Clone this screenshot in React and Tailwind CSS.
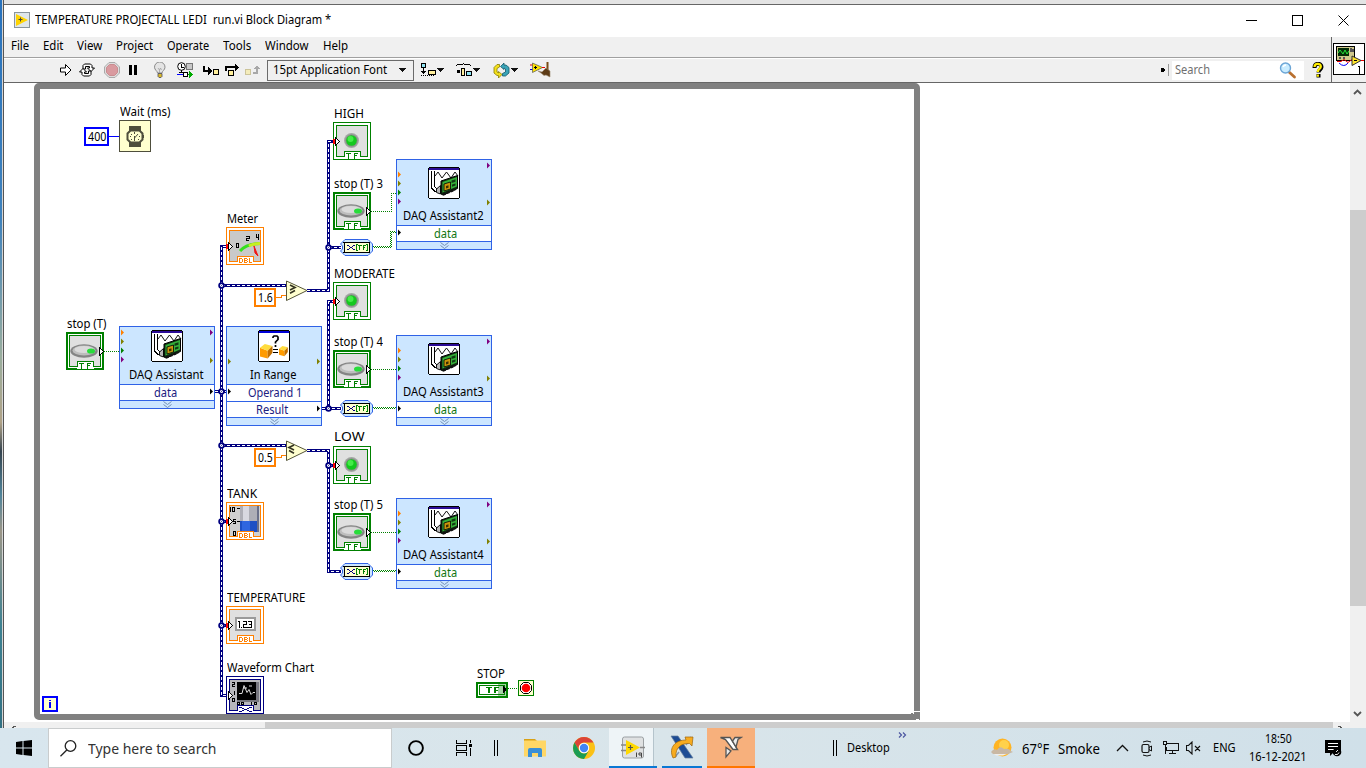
import React, { useLayoutEffect, useRef, useState } from "react";

const FONT = "font-['Noto_Sans','Open_Sans',sans-serif]";

/* One line of text condensed or widened to a given advance width. */
function Fit({ w, className = "", children }) {
  const ref = useRef(null);
  const [k, setK] = useState(1);
  useLayoutEffect(() => {
    const n = ref.current.offsetWidth;
    if (n) setK(w / n);
  }, [w, children]);
  return (
    <span className={"block shrink-0 whitespace-pre " + className} style={{ width: w }}>
      <span ref={ref} className="inline-block origin-left" style={{ transform: `scaleX(${k})` }}>{children}</span>
    </span>
  );
}

function Svg({ w, h, className = "", crisp = true, children }) {
  return (
    <svg width={w} height={h} viewBox={`0 0 ${w} ${h}`} className={"block shrink-0 " + className} shapeRendering={crisp ? "crispEdges" : "auto"} fill="none">
      {children}
    </svg>
  );
}

/* ---------- diagram ---------- */
const OX = 4, OY = 83;

function At({ x, y, children, className = "" }) {
  return <div className={"absolute " + className} style={{ left: x - OX, top: y - OY }}>{children}</div>;
}

function Label({ x, y, w, children }) {
  return (
    <At x={x} y={y - 9} className="text-[12.5px] leading-[18px] text-black">
      <Fit w={w}>{children}</Fit>
    </At>
  );
}

function Tag({ text, color }) {
  return (
    <g>
      <rect x="11" y="29" width="17" height="8" fill="#fff" />
      <path d="M11.500 35V29.500H27.500V35" stroke={color} />
      {text === "TF" && <path d="M13 31.500h5M15.500 31v6M21.500 37v-6M21 31.500h4M21 33.500h3" stroke={color} />}
      {text === "DBL" && <path d="M13.500 36v-5M13 31.500h3M16.500 32v3M13 35.500h3M18.500 36v-5M18 31.500h3M18 33.500h3M18 35.500h3M21.500 32v1M21.500 34v1M23.500 31v5M23 35.500h3" stroke={color} />}
      {text === "wave" && <path d="M13 31.500h3M16 32.500h2M18 33.500h3M21 32.500h2M23 31.500h3M16 34.500h2M21 34.500h2M13 35.500h3M23 35.500h3" stroke={color} />}
    </g>
  );
}

/* Hollow pixel arrow whose tip sits at (x+4, y). */
function PixelArrow({ x, y }) {
  return (
    <g transform={`translate(${x} ${y})`}>
      <path d="M0 -4h1v1h1v1h1v1h1v1h1v1h-1v1h-1v1h-1v1h-1v1h-1z" fill="#000" />
      <path d="M1 -2h1v1h1v1h1v1h-1v1h-1v1h-1z" fill="#fff" />
    </g>
  );
}

function InArrow() {
  return (
    <g>
      <rect x="0" y="17" width="2" height="5" fill="#f00" />
      <PixelArrow x={2} y={19} />
    </g>
  );
}

function Terminal({ x, y, color, tag, fill = "#e0e0e0", arrow = true, children }) {
  return (
    <At x={x} y={y}>
      <Svg w={38} h={38}>
        <rect x=".5" y=".5" width="37" height="37" fill="#fff" stroke={color} />
        <rect x="3.5" y="3.5" width="31" height="31" fill={fill} stroke={color} />
        {children}
        <Tag text={tag} color={color} />
        {arrow && <InArrow />}
      </Svg>
    </At>
  );
}

function Led({ x, y }) {
  return (
    <Terminal x={x} y={y} color="#008000" tag="TF">
      <g shapeRendering="auto">
        <circle cx="18.500" cy="18.500" r="7.500" fill="#a4a8a4" />
        <circle cx="18.500" cy="18.500" r="6.300" fill="#8c908c" />
        <circle cx="18.500" cy="18.500" r="5.300" fill="#14c81e" />
        <circle cx="17.500" cy="17" r="3" fill="#44ec48" />
      </g>
    </Terminal>
  );
}

function StopButton({ x, y }) {
  return (
    <At x={x} y={y}>
      <Svg w={38} h={38}>
        <rect x="1" y="1" width="36" height="36" fill="#fff" stroke="#008000" strokeWidth="2" />
        <rect x="3.5" y="3.5" width="31" height="31" fill="#e0e0e0" stroke="#008000" />
        <g shapeRendering="auto">
          <ellipse cx="18" cy="19" rx="13.700" ry="6.700" fill="#848484" />
          <ellipse cx="18" cy="18.500" rx="11.500" ry="5" fill="#bdbdbd" />
          <ellipse cx="18" cy="17.500" rx="9.500" ry="3.400" fill="#dadada" />
          <ellipse cx="25" cy="19" rx="4" ry="2.600" fill="#28dc3a" />
        </g>
        <PixelArrow x={33} y={19} />
        <Tag text="TF" color="#008000" />
      </Svg>
    </At>
  );
}

function DaqIcon() {
  return (
    <Svg w={32} h={32}>
      <rect x=".5" y=".5" width="31" height="31" rx="2" fill="#fff" stroke="#000" />
      <rect x="1" y="1" width="30" height="2" fill="#2a0a96" />
      <path d="M3.500 4v17l3 3h3M6.500 4v15.500l2 2h2" stroke="#000" />
      <path d="M7 9l3-4l4 6l4.500-6l4.500 6l4-6l3 4" stroke="#111" shapeRendering="auto" />
      <g shapeRendering="auto">
        <path d="M8.500 22l4-3.500v8.500l-4-1.500z" fill="#b8b8b8" stroke="#111" />
        <path d="M13 14l16.500-5.500v13L15 28l-2-1z" fill="#0f3010" stroke="#000" />
        <path d="M14.500 15L29 10v9.500L14.500 25.500z" fill="#36b03a" />
        <path d="M16 17l6.500-2v7L16 24z" fill="#c8960c" stroke="#000" strokeWidth=".8" />
        <path d="M18 19l2.500-.7v2.500L18 21.500z" fill="#3b2d00" />
        <path d="M23.500 13.500l4-1.300v2.500l-4 1.300zM24 17.500l3.500-1v2L24 19.700z" fill="#103a12" />
        <path d="M15 27.500l12-5" stroke="#111" strokeWidth="2.500" strokeDasharray="3 1" />
      </g>
    </Svg>
  );
}

function Cube({ x, y, s }) {
  return (
    <g transform={`translate(${x} ${y}) scale(${s})`} shapeRendering="auto">
      <path d="M0 4l8 3v8l-8-2z" fill="#ff9b00" />
      <path d="M0 4l5-4l8 2l-5 5z" fill="#ffdc3d" />
      <path d="M8 7l5-5v7l-5 6z" fill="#c46f00" />
    </g>
  );
}

function RangeIcon() {
  return (
    <Svg w={32} h={32}>
      <rect x=".5" y=".5" width="31" height="31" rx="2" fill="#fff" stroke="#000" />
      <rect x="1" y="1" width="30" height="2" fill="#0000d8" />
      <path d="M15 8V7l1-1h3l1 1v2.500l-2.500 2.500v1.500M17.500 15v2" stroke="#000" strokeWidth="1.700" shapeRendering="auto" />
      <path d="M15 19.500h5M15 22.500h5" stroke="#000" />
      <Cube x={2} y={14} s={0.96} />
      <Cube x={21} y={16} s={0.68} />
    </Svg>
  );
}

function Port({ x, y, c }) {
  return <path d={`M${x} ${y - 3}v6l3-3z`} fill={c} />;
}

function Express({ x, y, h, ports, icon, iconTop, name, nameW, nameY, rows }) {
  return (
    <At x={x} y={y}>
      <div className="relative flex w-24 flex-col border border-[#2f62e6] bg-[#cce6ff]" style={{ height: h }}>
        <div className="flex flex-1 flex-col items-center">
          <div style={{ paddingTop: iconTop - 1 }}>{icon}</div>
          <div className="pr-0.5 text-[12.500px] leading-[18px]" style={{ marginTop: nameY - 9 - iconTop - 32 }}><Fit w={nameW}>{name}</Fit></div>
        </div>
        {rows.map((r, i) => (
          <div key={r.t} className={"flex shrink-0 items-start border-t border-[#2f62e6] bg-white text-[12.500px] leading-[15px] " + (i === rows.length - 1 ? "h-4" : "h-[17px]")} style={{ color: r.c, paddingLeft: r.x }}>
            <Fit w={r.w}>{r.t}</Fit>
          </div>
        ))}
        <div className="flex h-[9px] shrink-0 justify-center border-t border-[#2f62e6]">
          <Svg w={9} h={8} crisp={false}><path d="M.500 .500l4 3L8.500 .500M.500 3.500l4 3L8.500 3.500" stroke="#7590b4" /></Svg>
        </div>
        <svg className="absolute -left-px -top-px" width="96" height={h} viewBox={`0 0 96 ${h}`}>
          {ports.map((p, i) => <Port key={i} x={p[0]} y={p[1]} c={p[2]} />)}
        </svg>
      </div>
    </At>
  );
}

const OR = "#ff8000", OL = "#808000", GR = "#008000", PU = "#800080";

function DaqOut({ x, y, name }) {
  return (
    <Express x={x} y={y} h={91} icon={<DaqIcon />} iconTop={8} name={name} nameW={81} nameY={57}
      rows={[{ t: "data", w: 23, x: 37, c: "#117611" }]}
      ports={[[2, 15.5, OR], [2, 24.5, OL], [2, 33.5, GR], [2, 42.5, PU], [91, 6.5, PU], [91, 43.5, OL], [2, 73.5, "#000"]]} />
  );
}

function Convert({ x, y }) {
  return (
    <At x={x} y={y}>
      <Svg w={33} h={17}>
        <path d="M5 .500H28L32.500 5V12L28 16.500H5L.500 12L2.500 10V7L.500 5z" fill="#cce6ff" stroke="#2f62e6" shapeRendering="auto" />
        <rect x="5" y="4" width="24" height="9" fill="#ffffcf" />
        <path d="M3 3.500h2M28 3.500h2M3 13.500h2M28 13.500h2M4.500 4v9M29.500 4v9M4 3.500h25M4 13.500h25" stroke="#000" />
        <path d="M7 6.500h2M13 6.500h2M7 10.500h2M13 10.500h2M9 7.500h1M12 7.500h1M10 8.500h2M9 9.500h1M12 9.500h1" stroke="#00007f" strokeWidth="1.200" />
        <path d="M18 5.500h-1.500v6H18M26 5.500h1.500v6H26M18 6.500h4M19.500 7v4M23.500 6v5M23 6.500h3M23 8.500h2" stroke="#008000" />
      </Svg>
    </At>
  );
}

function Compare({ x, y, flip }) {
  return (
    <At x={x} y={y}>
      <Svg w={22} h={22} crisp={false}>
        <path d="M.500 1L21 10.500L.500 20.500z" fill="#ffffcf" stroke="#55553a" />
        <g transform={flip ? "matrix(-1 0 0 1 12 0)" : undefined} stroke="#333322" strokeWidth="1.700">
          <path d="M4 5l5 2.500L4 10" />
          <path d="M4 9.500L9 12l-5 2.500" strokeWidth="0" />
          <path d="M4 13.200l5-2.600" />
        </g>
      </Svg>
    </At>
  );
}

function Constant({ x, y, color, w, tw, children }) {
  return (
    <At x={x} y={y}>
      <div className="flex h-[19px] items-center justify-center border-2 bg-white text-[12.500px] leading-[15px]" style={{ borderColor: color, width: w }}>
        <Fit w={tw}>{children}</Fit>
      </div>
    </At>
  );
}

const WIRES = [
  "M226 246.500H221.500V695.500H226", "M221.500 285.500H286", "M221.500 445.500H286", "M215 391.500H226",
  "M221.500 521.500H226", "M221.500 625.500H226",
  "M307 290.500H328.500V141.500H333", "M328.500 247.500H341",
  "M322 408.500H341", "M328.500 408.500V301.500H333",
  "M307 450.500H328.500V571.500H341", "M328.500 465.500H333",
];
const JOINTS = [[221.5, 285.5], [221.5, 391.5], [221.5, 445.5], [221.5, 521.5], [221.5, 625.5], [328.5, 247.5], [328.5, 408.5], [328.5, 465.5]];

function Wires() {
  return (
    <svg className="absolute left-0 top-0" width="1346" height="639" viewBox="4 83 1346 639" fill="none">
      <g shapeRendering="crispEdges">
        {WIRES.map((d) => <path key={d} d={d} stroke="#00007f" strokeWidth="3" />)}
        {WIRES.map((d) => <path key={d} d={d} stroke="#fff" strokeWidth="1" strokeDasharray="3 2" />)}
        <path d="M109 136.500h10" stroke="#0000ff" />
        <path d="M276 297.500h5.500v-2h5M276 457.500h5.500v-2h5" stroke="#ff8000" />
        <g stroke="#008000" strokeDasharray="1 1">
          <path d="M371 211.500H391.500V193.500H397" />
          <path d="M104 351.500H119M371 369.500H397M371 532.500H397M508 688.500H518" />
          <path d="M373 246.500H390.500V231.500H397M374 247.500H391.500V232.500H397" />
          <path d="M373 407.500H397M374 408.500H397M373 570.500H397M374 571.500H397" />
        </g>
      </g>
      {JOINTS.map(([a, b]) => (
        <g key={a + "-" + b}>
          <circle cx={a} cy={b} r="2.400" fill="#fff" stroke="#00007f" strokeWidth="1.700" />
          <path d={`M${a - 1} ${b + 1}l2-2`} stroke="#00007f" strokeWidth=".7" />
        </g>
      ))}
    </svg>
  );
}

function Diagram() {
  return (
    <div className="relative h-[639px] w-[1346px] overflow-hidden bg-white">
      <At x={34} y={83}><div className="h-[637px] w-[886px] rounded-[5px] border-[6px] border-[#808080]" /></At>
      <At x={911} y={711}>
        <Svg w={9} h={9}>
          <rect x="0" y="0" width="9" height="9" fill="#808080" />
          <path d="M3 0h6v1H3zM0 0h3v3H2V2H0zM0 0h3v1H0zM5 8h3v1H5z" fill="#fff" />
        </Svg>
      </At>
      <Wires />

      <Label x={120} y={112} w={51}>Wait (ms)</Label>
      <Constant x={84} y={127} color="#0000ff" w={25} tw={18}>400</Constant>
      <At x={119} y={120}>
        <Svg w={32} h={32}>
          <rect x=".5" y=".5" width="31" height="31" fill="#ffffcf" stroke="#4e4e3c" />
          <path d="M10 6h12v5H10zM10 22h12v5H10z" fill="#4e4e3c" />
          <g shapeRendering="auto">
            <path d="M11.500 10.500h9l3 3v6l-3 3h-9l-3-3v-6z" fill="#ffffcf" stroke="#4e4e3c" strokeWidth="2" />
            <path d="M15.500 18l3.500-4" stroke="#4e4e3c" />
          </g>
          <path d="M15.500 12v2M15.500 16v5M11 16.500h1M20 16.500h1M24.500 15v3M12 14.500h1M19 19.500h1M12 19.500h1" stroke="#4e4e3c" />
        </Svg>
      </At>

      <Label x={334} y={114} w={30}>HIGH</Label>
      <Led x={333} y={122} />
      <Label x={334} y={184} w={49}>stop (T) 3</Label>
      <StopButton x={333} y={192} />
      <Convert x={340} y={239} />
      <DaqOut x={396} y={159} name="DAQ Assistant2" />

      <Label x={334} y={274} w={61}>MODERATE</Label>
      <Led x={333} y={282} />
      <Label x={334} y={342} w={49}>stop (T) 4</Label>
      <StopButton x={333} y={350} />
      <Convert x={340} y={400} />
      <DaqOut x={396} y={335} name="DAQ Assistant3" />

      <Label x={334} y={437} w={31}>LOW</Label>
      <Led x={333} y={446} />
      <Label x={334} y={505} w={49}>stop (T) 5</Label>
      <StopButton x={333} y={513} />
      <Convert x={340} y={563} />
      <DaqOut x={396} y={498} name="DAQ Assistant4" />

      <Label x={67} y={324} w={39}>stop (T)</Label>
      <StopButton x={66} y={332} />
      <Express x={119} y={326} h={83} icon={<DaqIcon />} iconTop={4} name="DAQ Assistant" nameW={75} nameY={49}
        rows={[{ t: "data", w: 23, x: 34, c: "#20207f" }]}
        ports={[[2, 6.5, OR], [2, 15.5, OL], [2, 24.5, GR], [2, 33.5, PU], [91, 6.5, PU], [91, 34.5, OL], [91, 65.5, "#000"]]} />
      <Express x={226} y={326} h={100} icon={<RangeIcon />} iconTop={4} name="In Range" nameW={46} nameY={49}
        rows={[{ t: "Operand 1", w: 54, x: 21, c: "#20207f" }, { t: "Result", w: 32, x: 29, c: "#20207f" }]}
        ports={[[2, 35.5, OL], [91, 35.5, OL], [2, 65.5, "#000"], [91, 82.5, "#000"]]} />

      <Constant x={254} y={288} color="#ff8000" w={22} tw={15}>1.6</Constant>
      <Compare x={286} y={280} />
      <Constant x={254} y={448} color="#ff8000" w={22} tw={15}>0.5</Constant>
      <Compare x={286} y={440} flip />

      <Label x={227} y={219} w={31}>Meter</Label>
      <Terminal x={226} y={227} color="#ff8000" tag="DBL" fill="#c9c9c9">
        <g shapeRendering="auto">
          <path d="M14 24Q20 17 34 16.500" stroke="#35e01e" strokeWidth="3" />
          <path d="M23 19Q27 16.500 34 16.500" stroke="#c8ee20" strokeWidth="3" />
          <path d="M28 19l4 10l-3-3z" fill="#f01515" stroke="#f01515" />
        </g>
        <path d="M10.500 16.500h2v4h-2zM20 9.500h3v2h-3v2h3M30.500 7v3h2M32.500 7v6" stroke="#000" />
      </Terminal>

      <Label x={227} y={494} w={30}>TANK</Label>
      <Terminal x={226} y={502} color="#ff8000" tag="DBL" fill="#d0d0d0">
        <rect x="14" y="4" width="17" height="26" fill="#aeaeb6" />
        <rect x="17" y="4" width="6" height="15" fill="#d8d8e0" />
        <rect x="14" y="19" width="17" height="11" fill="#1e50c4" />
        <rect x="16" y="19" width="8" height="11" fill="#2f66e0" />
        <rect x="31" y="4" width="2" height="26" fill="#6a6f88" />
        <path d="M4.500 5v5M6.500 5.500h2v4h-2zM11 6.500h3M11 19.500h3M10 17.500H7.500v2H9.500v2H7M7.500 29.500h2v4h-2z" stroke="#000" />
      </Terminal>

      <Label x={227} y={598} w={78}>TEMPERATURE</Label>
      <Terminal x={226} y={606} color="#ff8000" tag="DBL">
        <rect x="10" y="12" width="19" height="12" fill="#fff" stroke="#9a9a9a" strokeWidth="2" />
        <path d="M12 15.500h1.500v6M15.500 21v1M17 15.500h3.500v3h-3v3h4M22 15.500h3.500v6H22M23 18.500h2" stroke="#000" />
      </Terminal>

      <Label x={227} y={668} w={87}>Waveform Chart</Label>
      <Terminal x={226} y={676} color="#00007f" tag="wave" fill="#b8b8bc" arrow={false}>
        <rect x="11" y="6" width="19" height="18" fill="#000" />
        <path d="M30 6h3v20H11v-2h19z" fill="#77777f" />
        <g shapeRendering="auto">
          <path d="M13 17.500h3l2-8l3 7l2-3l2 5l2-2h2M17 12h4M23 10h3" stroke="#ddd" />
        </g>
        <path d="M6 6.500h2v2H6v2h3M8 15v4M6.500 22.500h2v3h-2zM11.500 26.500h2v2h-2zM15.500 26.500h2v2h-2zM25.500 26v3M28.500 26.500h2v2h-2z" stroke="#000" />
        <PixelArrow x={2} y={19} />
      </Terminal>

      <Label x={477} y={674} w={28}>STOP</Label>
      <At x={476} y={682}>
        <Svg w={32} h={16}>
          <rect x="1" y="1" width="30" height="14" fill="#fff" stroke="#008000" strokeWidth="2" />
          <rect x="3.500" y="3.500" width="25" height="9" stroke="#008000" />
          <path d="M10 5.500h6M19 5.500h4M19 8.500h3" stroke="#008000" />
          <path d="M13 5v6M19 5v6" stroke="#008000" strokeWidth="2" />
          <rect x="22" y="2" width="8" height="12" fill="#008000" fillOpacity=".35" />
          <path d="M27 4h1v1h1v1h1v3h-1v1h-1v1h-1z" fill="#000" />
        </Svg>
      </At>
      <At x={518} y={680}>
        <Svg w={16} h={16}>
          <rect x=".5" y=".5" width="15" height="15" fill="#ffffcf" stroke="#008000" />
          <g shapeRendering="auto">
            <path d="M5.500 2.500h5l3 3v5l-3 3h-5l-3-3v-5z" fill="#fff" stroke="#000" />
            <circle cx="8" cy="8" r="4.300" fill="#f00" />
          </g>
        </Svg>
      </At>
      <At x={42} y={696}>
        <Svg w={16} h={16}>
          <rect x="1" y="1" width="14" height="14" fill="#ffffcf" stroke="#0000ff" strokeWidth="2" />
          <path d="M7 4h2v1H7zM7 6h2v6H7z" fill="#0000ff" />
        </Svg>
      </At>
    </div>
  );
}

/* ---------- window chrome ---------- */
function TitleBar() {
  return (
    <div className="flex h-8 shrink-0 items-center bg-white pb-[2px] pl-2.5 text-[12px] leading-4 text-black">
      <Svg w={16} h={16} crisp={false}>
        <rect x=".5" y=".5" width="15" height="15" fill="#dfe6ea" stroke="#8a959c" />
        <path d="M2 2l12 6l-12 6z" fill="#ffd400" />
        <path d="M6.500 5.500v4M4.500 7.500h4" stroke="#444" />
      </Svg>
      <Fit w={172} className="ml-[5px]">TEMPERATURE PROJECTALL LEDI</Fit>
      <Fit w={118} className="ml-1.5">run.vi Block Diagram *</Fit>
      <div className="ml-auto flex items-center gap-9 pr-[17px]">
        <Svg w={11} h={11}><path d="M0 5.500h11" stroke="#000" /></Svg>
        <Svg w={11} h={11} className="-ml-px"><path d="M.500 .500h10v10H.500z" stroke="#000" /></Svg>
        <Svg w={11} h={11} className="-ml-px" crisp={false}><path d="M.500 .500l10 10M10.500 .500l-10 10" stroke="#000" /></Svg>
      </div>
    </div>
  );
}

const MENUS = [["File", 18], ["Edit", 20], ["View", 25], ["Project", 37], ["Operate", 42], ["Tools", 28], ["Window", 44], ["Help", 25]];

function MenuBar() {
  return (
    <div className="flex h-5 shrink-0 items-start gap-3.5 bg-[#f0f0f0] pl-[7px] pt-px text-[12px] leading-4 text-black">
      {MENUS.map(([t, w]) => <Fit key={t} w={w}>{t}</Fit>)}
    </div>
  );
}

function Caret() {
  return <path d="M0 0h7v1H6v1H5v1H4v1H3V3H2V2H1V1H0z" fill="#111" />;
}

function Toolbar() {
  return (
    <div className="flex h-[23px] shrink-0 items-center bg-[#f0f0f0] pb-px pl-14 text-black">
      <Svg w={12} h={14} crisp={false}><path d="M.500 5h5V1.500L11 7L5.500 12.500V9h-5z" fill="#fff" stroke="#000" /></Svg>
      <Svg w={16} h={14} className="ml-[7px]" crisp={false}>
        <path d="M4 6V2.500L5.500 1h6L13 2.500V5h2.500L12 8.500L8.500 5h2V3.500h-4V6z" fill="#fff" stroke="#000" />
        <path d="M12 8v3.500L10.500 13h-6L3 11.500V9H.500L4 5.500L7.500 9h-2v1.500h4V8z" fill="#fff" stroke="#000" />
      </Svg>
      <Svg w={16} h={16} className="ml-[9px]" crisp={false}>
        <path d="M5 .500h6L15.500 5v6L11 15.500H5L.500 11V5z" fill="#ddd" stroke="#aaa" />
        <path d="M5.500 2.500h5l3 3v5l-3 3h-5l-3-3v-5z" fill="#d99a9f" stroke="#c98c90" />
      </Svg>
      <Svg w={10} h={12} className="ml-2"><path d="M1 1h3v10H1zM6 1h3v10H6z" fill="#000" /></Svg>
      <Svg w={14} h={16} className="ml-[15px]" crisp={false}>
        <path d="M4.500 11C4.500 9 1.500 8 1.500 5.200A5 5 0 0 1 12 5.200C12 8 9 9 9 11z" fill="#e4e4e4" stroke="#8a8a8a" />
        <path d="M5 6l1.500 2l1-2l1 2M6.500 8v3" stroke="#999" strokeWidth=".7" />
        <path d="M5 11.500h4v3l-1 1H6l-1-1z" fill="#d8b92c" stroke="#4b4b63" strokeWidth=".8" />
      </Svg>
      <Svg w={17} h={16} className="ml-2.5">
        <circle cx="4.500" cy="4.500" r="3.800" fill="#fff" stroke="#000" shapeRendering="auto" />
        <path d="M4.500 2v3h2" stroke="#000" />
        <rect x="9.500" y="1.500" width="6" height="6" fill="#c8c8c8" stroke="#777" />
        <path d="M4.500 8v3M2 10.500h5" stroke="#000" />
        <path d="M0 12.500h6" stroke="#00f" />
        <rect x="6.500" y="10.500" width="4" height="4" fill="#fff" stroke="#000" />
        <path d="M11 12.500h2" stroke="#090" /><path d="M12 9l4 3.500l-4 3.500z" fill="#0a0" />
      </Svg>
      <Svg w={17} h={12} className="ml-[8px]">
        <path d="M2 2v5h5" stroke="#000" strokeWidth="2" /><path d="M6 3h1v1h1v1h1v1h1v2H9v1H8v1H7v1H6z" fill="#000" />
        <rect x="11" y="5" width="5" height="5" fill="#ffef9c" stroke="#000" />
      </Svg>
      <Svg w={15} h={13} className="ml-[6px]">
        <path d="M1 7V3h10" stroke="#000" strokeWidth="2" /><path d="M10 0h1v1h1v1h1v1h1v1h-1v1h-1v1h-1v1h-1z" fill="#000" />
        <rect x="3.500" y="6.500" width="5" height="5" fill="#ffef9c" stroke="#000" />
      </Svg>
      <Svg w={16} h={12} className="ml-[5px]">
        <rect x=".5" y="5.500" width="5" height="5" fill="#f4ecba" stroke="#ccc49a" />
        <path d="M8 9h4V4" stroke="#a8a8a8" strokeWidth="2" /><path d="M8 5h1V4h1V3h1V2h2v1h1v1h1v1z" fill="#a8a8a8" />
      </Svg>
      <div className="ml-[6px] flex h-[21px] w-[147px] items-center justify-between border border-[#6b6b6b] bg-[#f0f0f0] pl-[5px] pr-[7px] text-[12.500px] leading-4">
        <Fit w={114}>15pt Application Font</Fit>
        <Svg w={7} h={4}><Caret /></Svg>
      </div>
      <Svg w={23} h={14} className="ml-[7px]">
        <rect x=".5" y=".5" width="4" height="4" fill="#8fe4f2" stroke="#000" />
        <path d="M2.500 5v6M0 12.500h1m1 0h1m1 0h1m1 0h1m1 0h1m1 0h1m1 0h1" stroke="#000" /><path d="M0 8h5v1H4v1H3v1H2v-1H1V9H0z" fill="#000" />
        <rect x="7.500" y="7.500" width="7" height="4" fill="#ffef9c" stroke="#000" />
        <g transform="translate(16 5)"><Caret /></g>
      </Svg>
      <Svg w={24} h={14} className="ml-3">
        <path d="M0 2.500h1M1 1.500h6M7 .500h1M8 1.500h6M14 2.500h1" stroke="#000" />
        <rect x="1" y="7" width="3" height="3" fill="#000" />
        <rect x="5.500" y="5.500" width="3" height="7" fill="#ffef9c" stroke="#000" />
        <rect x="10.500" y="8.500" width="5" height="4" fill="#8fe4f2" stroke="#000" />
        <g transform="translate(17 5)"><Caret /></g>
      </Svg>
      <Svg w={25} h={15} className="ml-[13px]" crisp={false}>
        <path d="M6.500 1.500H4L1 4.500v5.500l3 2.500h1.500V15L9 11.500L5.500 8.500v1.500L4 9V5.500l2.500-1.500z" fill="#f4e11c" stroke="#8a7c00" strokeWidth=".8" />
        <path d="M9.500 13h3l3.500-3V4.500l-3-2.500H11V0L7.500 3.500L11 6.500V5l1.500 1v3L9.500 10.500z" fill="#3aa4b8" stroke="#135868" strokeWidth=".8" />
        <g transform="translate(18 5)" shapeRendering="crispEdges"><Caret /></g>
      </Svg>
      <Svg w={22} h={16} className="ml-[12px]" crisp={false}>
        <path d="M0 3h4" stroke="#e00" /><path d="M0 7.500h4" stroke="#00d" />
        <path d="M2.500 1l10 4.500l-10 5z" fill="#ffe200" stroke="#555" strokeWidth=".7" />
        <path d="M5.500 4v3M4 5.500h3" stroke="#000" /><path d="M12 5.500h3" stroke="#e00" />
        <path d="M17.500 0v8" stroke="#7a4c15" strokeWidth="2" />
        <path d="M8 9l4 1l4-4l4 3v6l-4-2l-2 .5l-3-2.500z" fill="#5d3b16" stroke="#9a8a70" strokeWidth=".6" />
      </Svg>
      <div className="ml-auto flex items-center pr-[7px]">
        <Svg w={5} h={8}><path d="M0 2h1v4H0zM1 2h2v1h1v2H3v1H1z" fill="#000" /></Svg>
        <div className="ml-[2px] h-3 w-px bg-[#999]" />
        <div className="ml-[3px] flex h-[19px] w-[132px] items-center bg-white pl-[3px] text-[12px] leading-4 text-[#6f6f6f]">
          <Fit w={35}>Search</Fit>
          <Svg w={18} h={17} className="ml-[69px]" crisp={false}>
            <path d="M10 10l5.500 5" stroke="#b9702f" strokeWidth="2.800" strokeLinecap="round" />
            <circle cx="6.500" cy="6" r="5" fill="#c9ecff" stroke="#6ba5d6" strokeWidth="1.400" />
            <path d="M4 5q1-2 3-2" stroke="#fff" strokeWidth="1.500" />
          </Svg>
        </div>
        <Svg w={12} h={16} className="ml-2" crisp={false}>
          <path d="M2.500 6C2.500 .500 9.500 .500 9.500 5C9.500 7.500 6.500 7.500 6.500 10.500M6.500 12v3.500" stroke="#000" strokeWidth="4" />
          <path d="M2.500 5C2.500 .800 8.800 .800 8.800 4.500C8.800 7 5.800 7 5.800 10M5.800 12.500v2.200" stroke="#ffee00" strokeWidth="2.300" />
        </Svg>
      </div>
    </div>
  );
}

function ViIcon() {
  return (
    <Svg w={32} h={32}>
      <rect x=".5" y=".5" width="31" height="31" fill="#fff" stroke="#000" />
      <rect x="3.500" y="3.500" width="18" height="14" fill="#cfc88c" stroke="#000" />
      <rect x="5" y="5" width="11" height="8" fill="#042c08" />
      <path d="M5 10l2-3l3 4l2-4l2 4l2-3" stroke="#24e238" shapeRendering="auto" />
      <path d="M18 5v4M20 6v3M6 15h2M10 15h2" stroke="#555" strokeWidth="1.500" />
      <path d="M4 18.500h4l3-2l4 3l4-3h5" stroke="#e00" shapeRendering="auto" />
      <path d="M6 20q5 5 9 0" stroke="#00f" shapeRendering="auto" />
      <path d="M19 13l9 4.500l-9 5z" fill="#ffe52a" stroke="#333" shapeRendering="auto" />
      <path d="M28 17.500h3" stroke="#e00" /><path d="M21 17.500h3" stroke="#000" />
      <path d="M25 23.500h1.500v7" stroke="#000" />
    </Svg>
  );
}

/* ---------- task bar ---------- */
function TaskBar() {
  return (
    <div className={"flex h-10 w-[1366px] shrink-0 bg-gradient-to-r from-[#d8e6ee] via-[#d9e5ea] to-[#d0e0e9] text-black " + FONT}>
      <div className="flex w-12 items-center justify-center">
        <Svg w={16} h={16} crisp={false}><path d="M0 2l6.500-1v6.500H0zM7.500 .900L16 0v7.500H7.500zM0 8.500h6.500V15L0 14zM7.500 8.500H16V16l-8.500-1z" fill="#000" /></Svg>
      </div>
      <div className="flex w-[344px] items-center border border-[#c9cccd] bg-white pl-[11px] text-[14.500px] leading-5 text-[#333]">
        <Svg w={17} h={17} crisp={false}><circle cx="10.500" cy="6" r="5.300" stroke="#222" strokeWidth="1.300" /><path d="M6.800 10L.500 16.300" stroke="#222" strokeWidth="1.300" /></Svg>
        <Fit w={128} className="ml-[11px]">Type here to search</Fit>
      </div>
      <div className="flex items-center pl-4">
        <Svg w={16} h={16} crisp={false}><circle cx="8" cy="8" r="6.900" stroke="#000" strokeWidth="1.900" /></Svg>
        <Svg w={17} h={16} className="ml-8"><path d="M.500 0v3.500h10V0M.500 16v-3.500h10V16M.500 5.500h10v5H.500zM14.500 0v3M14.500 8v8" stroke="#000" /><rect x="13" y="4" width="3" height="3" fill="#000" /></Svg>
        <Svg w={5} h={16} className="ml-[21px]"><path d="M.500 0v16M3.500 0v16" stroke="#000" /></Svg>
        <Svg w={22} h={20} className="ml-[25px]" crisp={false}>
          <path d="M0 1h11l2 2H0z" fill="#d9a115" /><rect x="0" y="2.500" width="22" height="16" rx=".5" fill="#ffd766" />
          <path d="M4 19v-7q0-2 2-2h10q2 0 2 2v7h-4v-4H8v4z" fill="#3a8fd6" />
        </Svg>
        <Svg w={22} h={22} className="ml-[27px]" crisp={false}>
          <circle cx="11" cy="11" r="11" fill="#fbc116" />
          <path d="M1.500 5.500A11 11 0 0 1 20.500 5.500H11a5.500 5.500 0 0 0-4.800 8.200z" fill="#dc4437" />
          <path d="M1.500 5.500A11 11 0 0 0 11 22l4.800-8.250a5.500 5.500 0 0 1-9.600 0z" fill="#1a9c54" />
          <circle cx="11" cy="11" r="5.200" fill="#fff" /><circle cx="11" cy="11" r="4.200" fill="#4285f4" />
        </Svg>
      </div>
      <div className="ml-[14px] flex w-[48px] border-b-2 border-[#0a78d4]">
        <div className="flex w-[45px] items-center justify-center border-r border-[#b5c4cc] bg-[#eef4f7] pl-[3px] pt-0.5">
          <Svg w={24} h={24} crisp={false}>
            <rect x="1.500" y="1" width="21" height="21" rx="2" fill="#dfe1e2" stroke="#9ba0a3" />
            <path d="M0 9h5M0 14.500h5M19 11.500h5" stroke="#888" strokeWidth="1.500" />
            <path d="M5 4l14 7.500L5 19z" fill="#ffd900" /><path d="M9.500 9v5M7 11.500h5" stroke="#555" strokeWidth="1.200" />
            <path d="M15.500 16.500v4.500M18 17h2.500v4.500M20.500 19H18v-2" stroke="#444" />
          </Svg>
        </div>
      </div>
      <div className="ml-[5px] flex w-10 items-center justify-center border-b-2 border-[#0a78d4]">
        <Svg w={25} h={24} crisp={false}>
          <path d="M1 1h7l15 22h-8z" fill="#1d4c94" stroke="#657f9e" strokeWidth=".7" />
          <path d="M16 10l5-8M5 22l4-5" stroke="#7c96b6" strokeWidth="1.500" />
          <path d="M3 23C-2 12 6 5 16 5L15 2l8 0l-1 9l-2.500-2.500C12 8 5 12 6 22z" fill="#f7ab1e" stroke="#9b6610" strokeWidth=".7" />
        </Svg>
      </div>
      <div className="ml-[5px] flex w-12 items-center justify-center border-b-2 border-[#ff7600] bg-[#f7b07c]">
        <Svg w={24} h={24} crisp={false}>
          <path d="M1.500 2.500l5 2l7.500 10h4.500L11 2.500z" fill="#fff" stroke="#555" strokeWidth="1.400" />
          <path d="M13.500 6l2.500-3.500h6l-3 2l-2 7.500zM7 12.500v9.500l5-6z" fill="#ececec" stroke="#555" strokeWidth="1.300" />
        </Svg>
      </div>
      <div className="ml-[78px] flex items-center text-[12px] leading-4">
        <Svg w={5} h={16}><path d="M.500 0v16M3.500 0v16" stroke="#000" /></Svg>
        <Fit w={43} className="ml-[9px]">Desktop</Fit>
        <Svg w={9} h={6} className="mb-[27px] ml-2" crisp={false}><path d="M1 .500L3.500 3L1 5.500M5 .500L7.500 3L5 5.500" stroke="#4b55a0" strokeWidth="1.200" /></Svg>
      </div>
      <div className="ml-auto flex items-center pr-[24px] text-[12px] leading-[18px]">
        <Svg w={22} h={20} crisp={false}>
          <circle cx="11.500" cy="9.500" r="9" fill="#ffb423" /><circle cx="13" cy="7" r="5" fill="#ffd14b" />
          <path d="M0 14q3-4 6-2q3-5 7-1q5-1 7 2l2 1l-5 2H2z" fill="#c9b8a4" /><path d="M3 16h13l-4 1.500H5z" fill="#eee" />
        </Svg>
        <Fit w={27} className="ml-[9px] pt-px text-[13.500px]">67°F</Fit>
        <Fit w={42} className="ml-[9px] pt-px text-[13.500px]">Smoke</Fit>
        <Svg w={13} h={8} className="ml-[16px]" crisp={false}><path d="M1 7l5.500-5.500L12 7" stroke="#111" strokeWidth="1.300" /></Svg>
        <Svg w={12} h={17} className="ml-[12px]" crisp={false}><path d="M2 2q4-2 8 0M2 15q4 2 8 0" stroke="#111" /><rect x="1" y="4.500" width="7" height="8" rx="1.500" stroke="#111" strokeWidth="1.200" /><path d="M8 7.500l2.500-1.500v5L8 9.500" stroke="#111" /></Svg>
        <Svg w={17} h={14} className="ml-[10px]"><path d="M4 2.500h11.500v7H3.500v-4M9.500 10v3M6 12.500h7M.500 .500h3v3h-3zM2 4v9" stroke="#111" /></Svg>
        <Svg w={15} h={14} className="ml-[6px]" crisp={false}><path d="M.500 4.500h2L6 1v12L2.500 9.500h-2zM9 5l5 5M14 5l-5 5" stroke="#111" strokeWidth="1.100" /></Svg>
        <Fit w={23} className="ml-[12px]">ENG</Fit>
        <div className="ml-[13px] flex flex-col items-center">
          <Fit w={27}>18:50</Fit>
          <Fit w={58}>16-12-2021</Fit>
        </div>
        <Svg w={17} h={17} className="ml-[18px]" crisp={false}>
          <path d="M0 0h16v13H8l-3 3v-3H0z" fill="#000" /><path d="M3 3.500h10M3 6.500h10M3 9.500h6" stroke="#fff" />
          <circle cx="12" cy="12" r="4.300" fill="#000" /><path d="M10 14.500q3 1 4-2M11 12l2-2" stroke="#fff" strokeWidth=".9" />
        </Svg>
      </div>
    </div>
  );
}

export default function App() {
  return (
    <div className={"flex h-[768px] w-[1366px] flex-col overflow-hidden bg-white " + FONT}>
      <div className="flex h-[728px] shrink-0">
        <div className="flex w-1 shrink-0">
          <div className="w-0.5 bg-[linear-gradient(#2872bc_0%,#3f82bc_30%,#9aae9e_49%,#b0a287_58%,#35444f_62%,#50849a_68%,#9b9688_73%,#3d8191_86%,#327183_100%)]" />
          <div className="w-px bg-[#d5d5d5]" />
          <div className="w-px bg-[#555]" />
        </div>
        <div className="flex w-[1362px] flex-col">
          <div className="h-[5px] shrink-0 border-b border-[#666] bg-[#e4e4e4]" />
          <TitleBar />
          <div className="flex h-[46px] shrink-0 border-b border-[#666]">
            <div className="flex w-[1327px] flex-col">
              <MenuBar />
              <div className="h-0.5 shrink-0 border-t border-[#a0a0a0] bg-white" />
              <Toolbar />
            </div>
            <div className="w-[35px] border-l border-[#666] bg-[#f0f0f0] pl-px pt-1.5"><ViIcon /></div>
          </div>
          <div className="flex h-[639px] shrink-0">
            <Diagram />
            <div className="flex w-4 flex-col items-center bg-[#f0f0f0]">
              <Svg w={9} h={6} className="mr-px mt-1.5" crisp={false}><path d="M1 5l3.500-3.500L8 5" stroke="#555" strokeWidth="1.800" /></Svg>
              <div className="mt-[115px] h-[396px] w-full bg-[#cdcdcd]" />
              <Svg w={9} h={6} className="mb-[5px] mr-px mt-auto" crisp={false}><path d="M1 1l3.500 3.500L8 1" stroke="#555" strokeWidth="1.800" /></Svg>
            </div>
          </div>
          <div className="flex h-1.5 shrink-0 items-end bg-[#f0f0f0]">
            <Svg w={5} h={2} className="ml-[7px]"><path d="M1 2V1h1V0h3v1H3v1z" fill="#555" /></Svg>
            <div className="ml-[249px] h-1.5 w-[1068px] bg-[#cdcdcd]" />
            <Svg w={5} h={2} className="ml-[5px]"><path d="M0 0h3v1h1v1H2V1H0z" fill="#555" /></Svg>
          </div>
        </div>
      </div>
      <TaskBar />
    </div>
  );
}
